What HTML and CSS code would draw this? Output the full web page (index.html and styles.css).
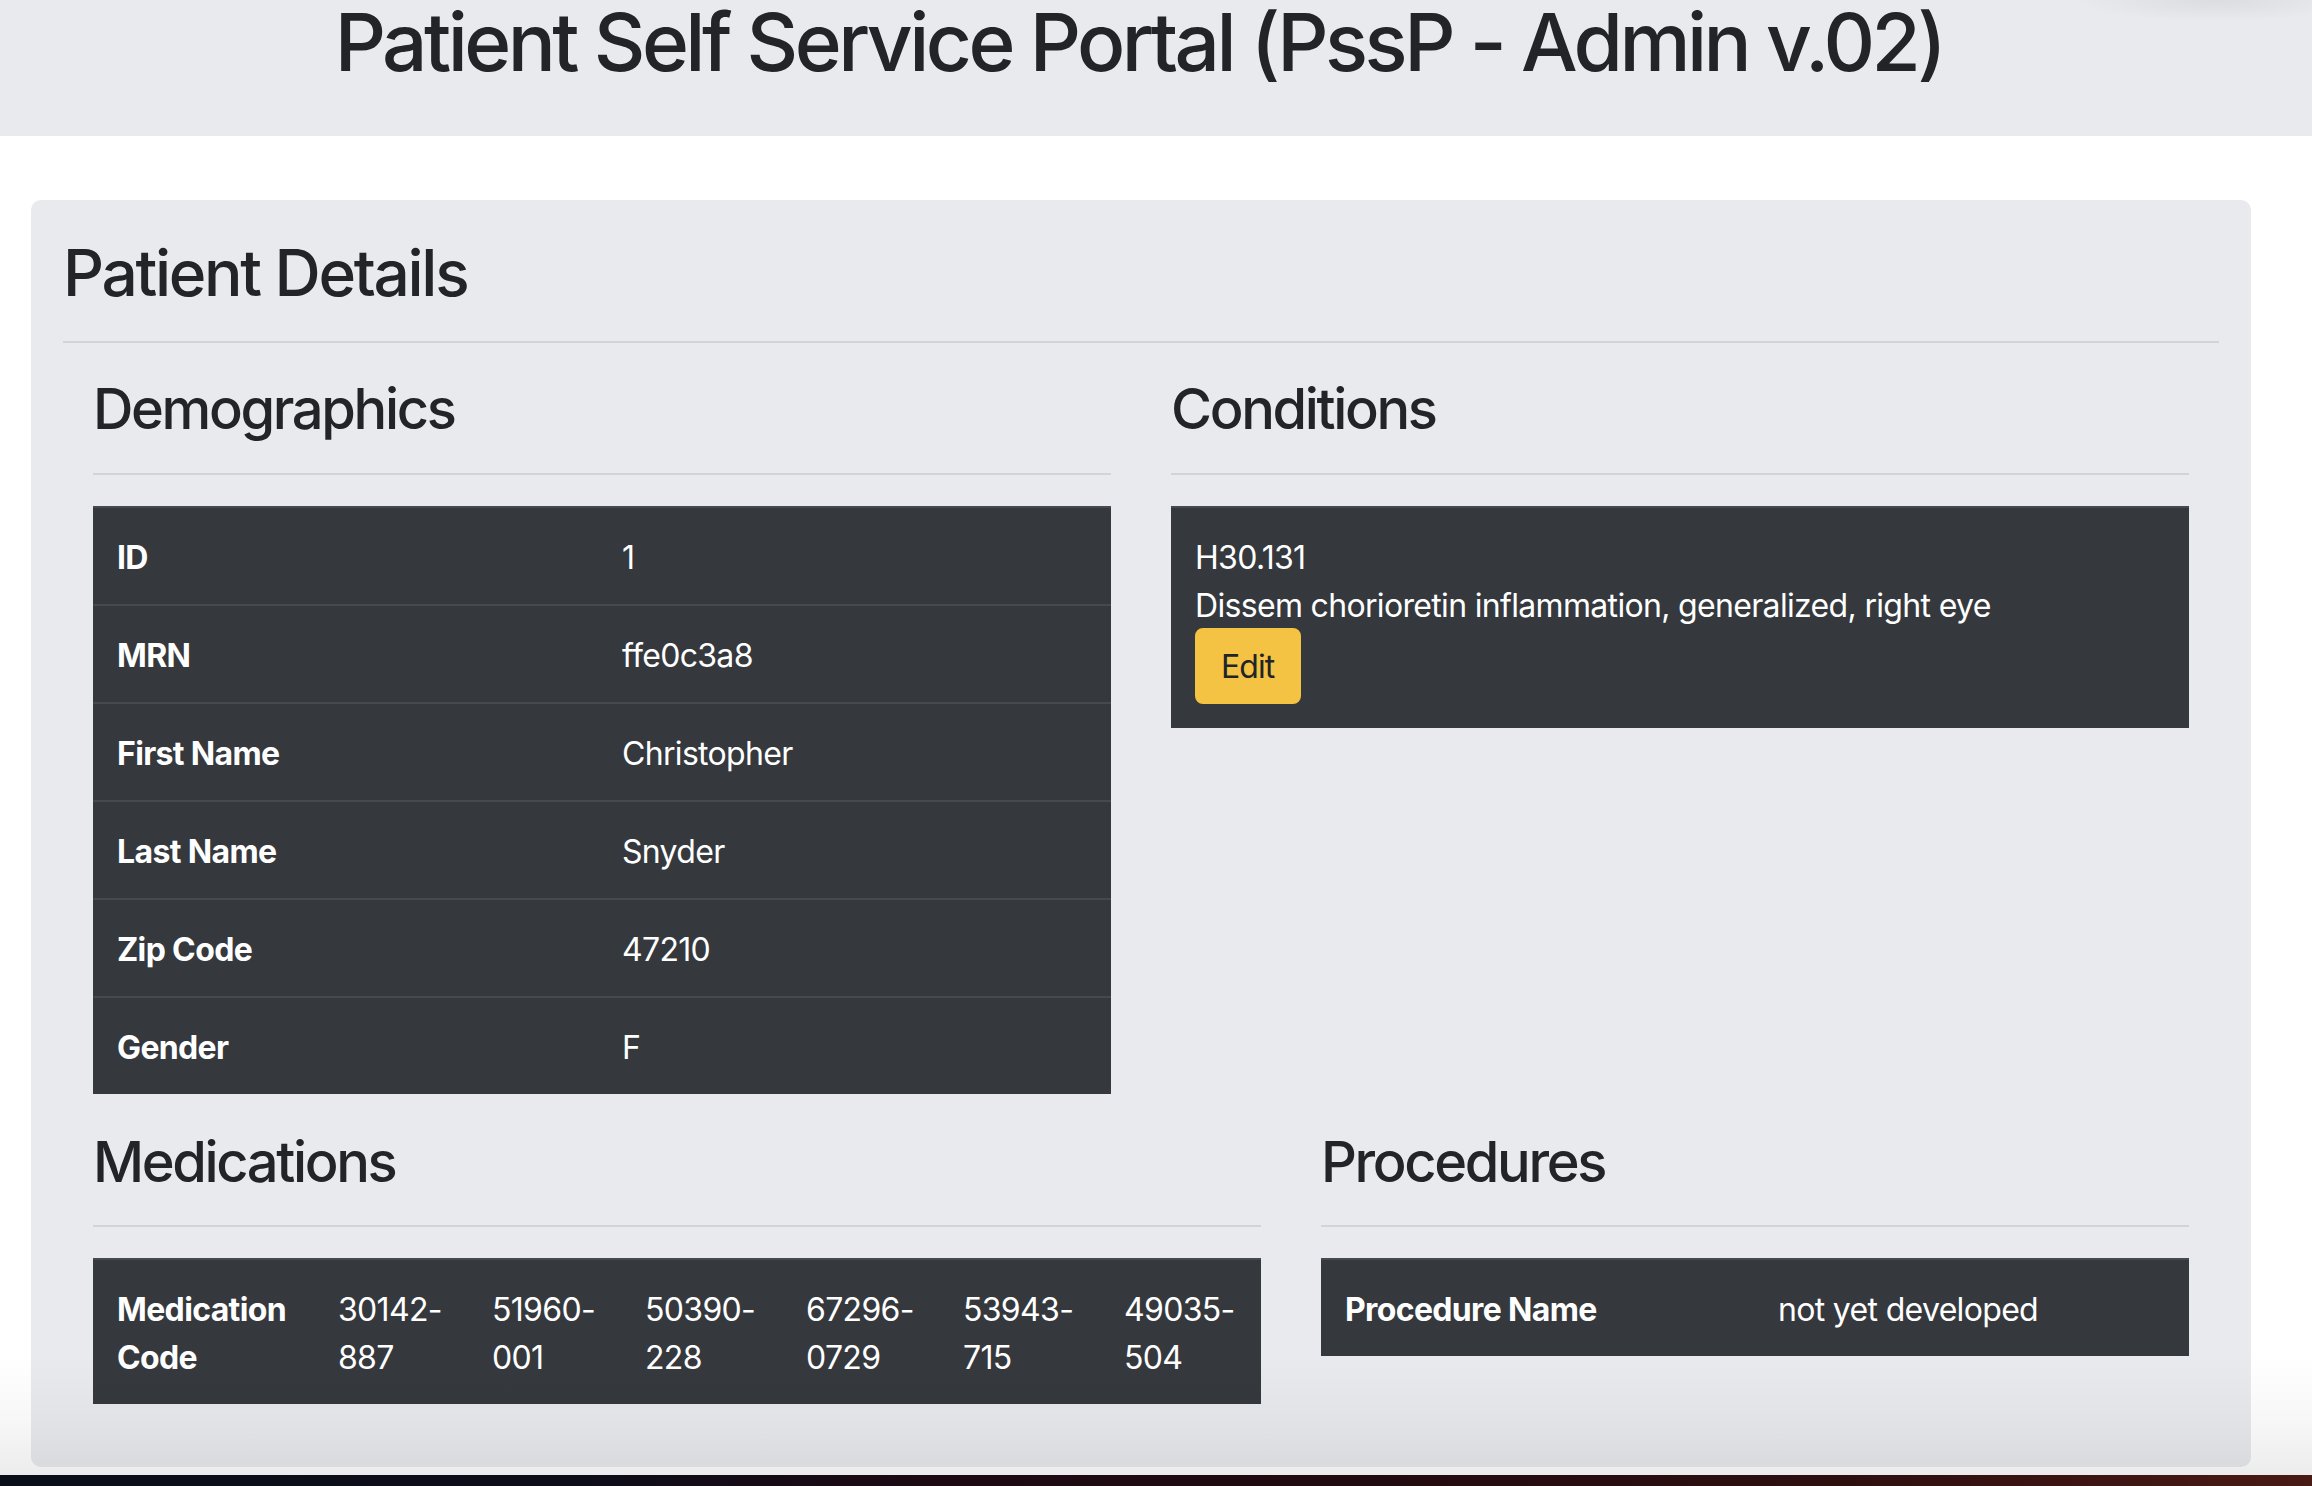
FILE: index.html
```html
<!DOCTYPE html>
<html lang="en">
<head>
<meta charset="utf-8">
<title>Patient Self Service Portal</title>
<link rel="stylesheet" href="styles.css">
</head>
<body>
<header class="topbar">
  <h1 class="site-title">Patient Self Service Portal (PssP - Admin v.02)</h1>
</header>

<main class="page">
  <section class="card">
    <h2 class="card-title">Patient Details</h2>
    <hr class="rule">

    <div class="sections sections-top">
      <div class="section">
        <h3 class="section-title">Demographics</h3>
        <hr class="rule">
        <table class="dark-table demo-table">
          <colgroup><col class="demo-label"><col></colgroup>
          <tbody>
            <tr><th>ID</th><td>1</td></tr>
            <tr><th>MRN</th><td>ffe0c3a8</td></tr>
            <tr><th>First Name</th><td>Christopher</td></tr>
            <tr><th>Last Name</th><td>Snyder</td></tr>
            <tr><th>Zip Code</th><td>47210</td></tr>
            <tr><th>Gender</th><td>F</td></tr>
          </tbody>
        </table>
      </div>

      <div class="section">
        <h3 class="section-title">Conditions</h3>
        <hr class="rule">
        <table class="dark-table cond-table">
          <tbody>
            <tr>
              <td>
                <div class="cond-code">H30.131</div>
                <div class="cond-desc">Dissem chorioretin inflammation, generalized, right eye</div>
                <button class="btn-edit" type="button">Edit</button>
              </td>
            </tr>
          </tbody>
        </table>
      </div>
    </div>

    <div class="sections sections-bottom">
      <div class="section">
        <h3 class="section-title">Medications</h3>
        <hr class="rule">
        <table class="dark-table med-table">
          <colgroup>
            <col class="mc-label"><col class="mc-a"><col class="mc-b"><col class="mc-c"><col class="mc-d"><col class="mc-e"><col class="mc-f">
          </colgroup>
          <tbody>
            <tr>
              <th>Medication Code</th>
              <td>30142-887</td>
              <td>51960-001</td>
              <td>50390-228</td>
              <td>67296-0729</td>
              <td>53943-715</td>
              <td>49035-504</td>
            </tr>
          </tbody>
        </table>
      </div>

      <div class="section">
        <h3 class="section-title">Procedures</h3>
        <hr class="rule">
        <table class="dark-table proc-table">
          <colgroup><col class="proc-label"><col></colgroup>
          <tbody>
            <tr><th>Procedure Name</th><td>not yet developed</td></tr>
          </tbody>
        </table>
      </div>
    </div>
  </section>
</main>

<div class="corner-shadow"></div>
<div class="dock-shade"></div>
<div class="desktop-strip"></div>
</body>
</html>
```
FILE: styles.css
```css
html, body {
  margin: 0;
  padding: 0;
}

body {
  background: #ffffff;
  color: #212529;
  font-family: Inter, "Noto Sans", "Liberation Sans", sans-serif;
  font-size: 32px;
  line-height: 48px;
  letter-spacing: -0.021em;
  overflow: hidden;
  height: 1486px;
  position: relative;
}

/* ---------- header band ---------- */
.topbar {
  background: #e9eaee;
  height: 136px;
  box-sizing: border-box;
  padding: 2px 34px 0 0;
}

.site-title {
  margin: 0;
  font-size: 80px;
  line-height: 80px;
  font-weight: 500;
  letter-spacing: -0.0443em;
  text-align: center;
  color: #222428;
}

/* ---------- page / card ---------- */
.page {
  padding: 64px 61px 0 31px;
}

.card {
  background: #e9eaee;
  border-radius: 10px;
  padding: 35px 32px 63px;
}

.card-title {
  margin: 0;
  font-size: 64px;
  line-height: 76.8px;
  font-weight: 500;
  letter-spacing: -0.036em;
  color: #222428;
}

.rule {
  border: 0;
  height: 2px;
  background: #d3d4d8;
  margin: 29px 0 31px;
}

.sections {
  display: grid;
  column-gap: 60px;
  padding: 0 30px;
  align-items: start;
}

.sections-top {
  grid-template-columns: 1018px 1018px;
}

.sections-bottom {
  grid-template-columns: 1168px 868px;
}

.section-title {
  margin: 2px 0 0;
  font-size: 56px;
  line-height: 67.2px;
  font-weight: 500;
  letter-spacing: -0.042em;
  color: #222428;
}

.sections-bottom .section-title {
  margin-top: 3px;
}

.section .rule {
  margin: 30px 0 31px;
}

.sections-bottom .section .rule {
  margin-top: 29px;
}

/* ---------- dark tables ---------- */
.dark-table {
  width: 100%;
  table-layout: fixed;
  border-collapse: collapse;
  background: #35393e;
  color: #ffffff;
  margin: 0 0 32px;
}

.dark-table th,
.dark-table td {
  padding: 26px 24px 22px;
  border-top: 2px solid #454a50;
  text-align: left;
  vertical-align: top;
  font-size: 32px;
  line-height: 48px;
}

.dark-table th {
  font-weight: 700;
  letter-spacing: -0.02em;
}

.dark-table td {
  font-weight: 400;
}

.demo-label { width: 505px; }
.proc-label { width: 433px; }

.mc-label { width: 221px; }
.mc-a { width: 154px; }
.mc-b { width: 153px; }
.mc-c { width: 161px; }
.mc-d { width: 157px; }
.mc-e { width: 161px; }
.mc-f { width: 161px; }

.med-table,
.proc-table {
  margin-bottom: 0;
}

/* ---------- condition cell ---------- */
.cond-table td {
  padding-bottom: 24px;
}

.btn-edit {
  display: block;
  margin: -2px 0 0;
  padding: 13px 25px 11px 24px;
  border: 2px solid #f4c343;
  border-radius: 8px;
  background: #f4c343;
  color: #212529;
  font-family: inherit;
  font-size: 32px;
  line-height: 48px;
  letter-spacing: -0.03em;
  font-weight: 400;
}

/* ---------- desktop edge (screenshot surroundings) ---------- */
.corner-shadow {
  position: absolute;
  top: 0;
  right: 0;
  width: 240px;
  height: 22px;
  background: radial-gradient(ellipse at 60% 0%, rgba(0, 0, 0, 0.06) 0%, rgba(0, 0, 0, 0) 70%);
  pointer-events: none;
}

.dock-shade {
  position: absolute;
  left: 0;
  right: 0;
  bottom: 11px;
  height: 120px;
  background: linear-gradient(to bottom, rgba(0, 0, 0, 0) 0%, rgba(0, 0, 0, 0.03) 55%, rgba(0, 0, 0, 0.075) 100%);
  pointer-events: none;
}

.desktop-strip {
  position: absolute;
  left: 0;
  right: 0;
  bottom: 0;
  height: 11px;
  background: linear-gradient(to right, #0a0e18 0%, #0d0d18 25%, #1c0912 40%, #220b10 60%, #2e0f10 80%, #4a1a14 100%);
}
```
